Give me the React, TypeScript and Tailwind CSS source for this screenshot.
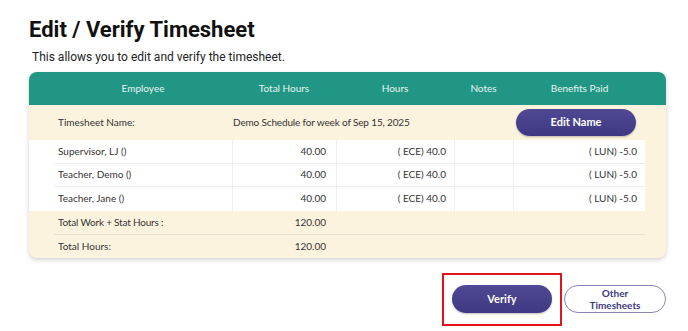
import React from "react";

const rows = [
  { name: "Supervisor, LJ ()", total: "40.00", hours: "( ECE) 40.0", notes: "", benefits: "( LUN) -5.0" },
  { name: "Teacher, Demo ()", total: "40.00", hours: "( ECE) 40.0", notes: "", benefits: "( LUN) -5.0" },
  { name: "Teacher, Jane ()", total: "40.00", hours: "( ECE) 40.0", notes: "", benefits: "( LUN) -5.0" },
];

const cols = "grid grid-cols-[178px_104px_118px_59px_133px]";

export default function App() {
  return (
    <div className="w-[688px] h-[331px] bg-white overflow-hidden" style={{ fontFamily: "Lato, 'Noto Sans', sans-serif" }}>
      <div className="pl-[29px] pt-[17px]">
        <h1 className="text-[22px] leading-[26px] font-bold text-[#111]" style={{ fontFamily: "Roboto, sans-serif" }}>
          Edit / Verify Timesheet
        </h1>
        <p className="mt-[7px] ml-[3px] text-[12px] leading-[14px] text-[#222]" style={{ fontFamily: "Roboto, sans-serif" }}>
          This allows you to edit and verify the timesheet.
        </p>

        <div className="mt-[8px] w-[637px] rounded-[8px] bg-[#fcf3df] shadow-[0_2px_5px_rgba(0,0,0,0.18)] overflow-hidden">
          <div className="h-[33px] bg-[#229684] pl-[25px] flex items-center">
            <div className={`${cols} w-[592px] text-[10px] text-[#e6f4f1]`}>
              <div className="text-center">Employee</div>
              <div className="text-center">Total Hours</div>
              <div className="text-center">Hours</div>
              <div className="text-center">Notes</div>
              <div className="text-center">Benefits Paid</div>
            </div>
          </div>

          <div className="h-[35px] pl-[29px] pr-[30px] flex items-center text-[10px] text-[#333]">
            <div className="w-[175px]">Timesheet Name:</div>
            <div className="tracking-[-0.15px]">Demo Schedule for week of Sep 15, 2025</div>
            <button className="ml-auto w-[120px] h-[27px] rounded-full bg-gradient-to-b from-[#504894] to-[#3e3982] text-white text-[11px] font-bold shadow-[0_1px_2px_rgba(0,0,0,0.25)]">
              Edit Name
            </button>
          </div>

          <div className="w-[616px] bg-white pl-[25px]">
            {rows.map((r, i) => (
              <div key={i} className={`${cols} h-[23.5px] text-[10px] text-[#333] ${i < rows.length - 1 ? "border-b border-[#eeeeee]" : ""}`}>
                <div className="flex items-center pl-[4px]">{r.name}</div>
                <div className="flex items-center justify-end pr-[10px] border-l border-[#eeeeee]">{r.total}</div>
                <div className="flex items-center justify-end pr-[8px] border-l border-[#eeeeee]">{r.hours}</div>
                <div className="flex items-center border-l border-[#eeeeee]">{r.notes}</div>
                <div className="flex items-center justify-end pr-[9px] border-l border-[#eeeeee]">{r.benefits}</div>
              </div>
            ))}
          </div>

          <div className="w-[616px] pl-[25px] text-[10px] text-[#333]">
            <div className={`${cols} h-[24px] border-b border-[#e6e0d0]`}>
              <div className="flex items-center pl-[4px] tracking-[-0.2px]">Total Work + Stat Hours :</div>
              <div className="flex items-center justify-end pr-[10px]">120.00</div>
            </div>
            <div className={`${cols} h-[23px]`}>
              <div className="flex items-center pl-[4px]">Total Hours:</div>
              <div className="flex items-center justify-end pr-[10px]">120.00</div>
            </div>
          </div>
        </div>

        <div className="mt-[15px] flex items-center justify-end w-[637px]">
          <div className="border-2 border-[#e2131c] w-[120px] h-[53px] flex items-center justify-center">
            <button className="w-[100px] h-[28px] rounded-full bg-gradient-to-b from-[#504894] to-[#3e3982] text-white text-[11px] font-bold shadow-[0_1px_2px_rgba(0,0,0,0.25)]">
              Verify
            </button>
          </div>
          <button className="ml-[2px] w-[102px] h-[28px] rounded-full border border-[#8a86b4] bg-white text-[#3e3982] text-[10px] leading-[12px] font-bold flex flex-col items-center justify-center">
            <span>Other</span>
            <span>Timesheets</span>
          </button>
        </div>
      </div>
    </div>
  );
}
